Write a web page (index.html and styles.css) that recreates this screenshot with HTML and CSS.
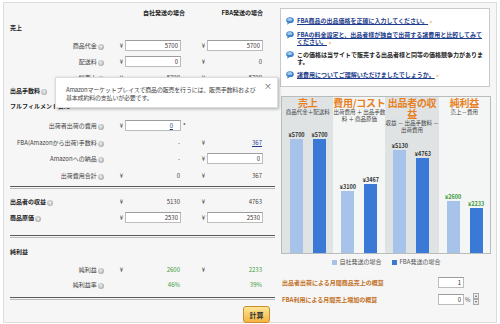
FILE: index.html
```html
<!DOCTYPE html>
<html lang="ja">
<head>
<meta charset="UTF-8">
<meta name="viewport" content="width=device-width, initial-scale=1.0">
<title>FBA料金シミュレーター</title>
<link rel="stylesheet" href="styles.css">
</head>
<body>
<div class="page">

  <div class="calc">
    <div class="grid head">
      <span class="h1">自社発送の場合</span>
      <span class="h2">FBA発送の場合</span>
    </div>

    <div class="title">売上</div>
    <div class="grid row first">
      <span class="label">商品代金 <i class="help">?</i></span>
      <span class="yen">¥</span><input class="field" value="5700">
      <span class="yen">¥</span><input class="field" value="5700">
    </div>
    <div class="grid row">
      <span class="label">配送料 <i class="help">?</i></span>
      <span class="yen">¥</span><input class="field" value="0">
      <span class="yen">¥</span><span class="num">0</span>
    </div>
    <div class="grid row">
      <span class="label">総売上 <i class="help">?</i></span>
      <span class="yen">¥</span><span class="num">5700</span>
      <span class="yen">¥</span><span class="num">5700</span>
    </div>

    <div class="title fee">出品手数料 <i class="help">?</i></div>
    <div class="title ful">フルフィルメント費用</div>

    <div class="grid row first tall">
      <span class="label">出荷者出荷の費用 <i class="help">?</i></span>
      <span class="yen">¥</span><span class="field link-field"><a href="#">0</a></span>
      <span class="mark">*</span><span></span>
    </div>
    <div class="grid row">
      <span class="label">FBA(Amazonから出荷)手数料 <i class="help">?</i></span>
      <span></span><span class="num">-</span>
      <span class="yen">¥</span><span class="num"><a href="#">367</a></span>
    </div>
    <div class="grid row tall">
      <span class="label">Amazonへの納品 <i class="help">?</i></span>
      <span></span><span class="num">-</span>
      <span class="yen">¥</span><input class="field" value="0">
    </div>
    <div class="grid row">
      <span class="label">出荷費用合計 <i class="help">?</i></span>
      <span class="yen">¥</span><span class="num">0</span>
      <span class="yen">¥</span><span class="num">367</span>
    </div>

    <hr class="rule r1">

    <div class="grid row first-r2">
      <span class="label strong">出品者の収益 <i class="help">?</i></span>
      <span class="yen">¥</span><span class="num">5130</span>
      <span class="yen">¥</span><span class="num">4763</span>
    </div>
    <div class="grid row">
      <span class="label strong">商品原価 <i class="help">?</i></span>
      <span class="yen">¥</span><input class="field" value="2530">
      <span class="yen">¥</span><input class="field" value="2530">
    </div>

    <hr class="rule r2">

    <div class="title net">純利益</div>
    <div class="grid row first">
      <span class="label">純利益 <i class="help">?</i></span>
      <span class="yen">¥</span><span class="num green">2600</span>
      <span class="yen">¥</span><span class="num green">2233</span>
    </div>
    <div class="grid row short">
      <span class="label">純利益率 <i class="help">?</i></span>
      <span></span><span class="num green">46%</span>
      <span></span><span class="num green">39%</span>
    </div>

    <hr class="rule r3">

    <div class="actions">
      <button class="calc-btn">計算</button>
    </div>
  </div>

  <div class="side">
    <ul class="tips">
      <li>
        <svg class="bubble" width="8" height="8" viewBox="0 0 8 8"><ellipse cx="4" cy="3.2" rx="3.8" ry="2.9" fill="#3f84c9"/><ellipse cx="3.7" cy="2.5" rx="2.6" ry="1.5" fill="#9fcdf2"/><path d="M1.8 5.3 L1 7.8 L3.8 6" fill="#3f84c9"/></svg>
        <span><a href="#">FBA商品の出品価格を正確に入力してください。</a> <span class="more">»</span></span>
      </li>
      <li>
        <svg class="bubble" width="8" height="8" viewBox="0 0 8 8"><ellipse cx="4" cy="3.2" rx="3.8" ry="2.9" fill="#3f84c9"/><ellipse cx="3.7" cy="2.5" rx="2.6" ry="1.5" fill="#9fcdf2"/><path d="M1.8 5.3 L1 7.8 L3.8 6" fill="#3f84c9"/></svg>
        <span><a href="#">FBAの料金設定と、出品者様が独自で出荷する諸費用と比較してみてください。</a> <span class="more">»</span></span>
      </li>
      <li>
        <svg class="bubble" width="8" height="8" viewBox="0 0 8 8"><ellipse cx="4" cy="3.2" rx="3.8" ry="2.9" fill="#3f84c9"/><ellipse cx="3.7" cy="2.5" rx="2.6" ry="1.5" fill="#9fcdf2"/><path d="M1.8 5.3 L1 7.8 L3.8 6" fill="#3f84c9"/></svg>
        <span>この価格は当サイトで販売する出品者様と同等の価格競争力があります。</span>
      </li>
      <li>
        <svg class="bubble" width="8" height="8" viewBox="0 0 8 8"><ellipse cx="4" cy="3.2" rx="3.8" ry="2.9" fill="#3f84c9"/><ellipse cx="3.7" cy="2.5" rx="2.6" ry="1.5" fill="#9fcdf2"/><path d="M1.8 5.3 L1 7.8 L3.8 6" fill="#3f84c9"/></svg>
        <span><a href="#">諸費用についてご理解いただけましたでしょうか。</a> <span class="more">»</span></span>
      </li>
    </ul>

    <div class="chart">
      <div class="col shade">
        <h3>売上</h3>
        <p>商品代金＋配送料</p>
        <div class="bars">
          <div class="bar"><b>¥5700</b><i style="height:114px"></i></div>
          <div class="bar fba"><b>¥5700</b><i style="height:114px"></i></div>
        </div>
      </div>
      <div class="col">
        <h3>費用/コスト</h3>
        <p>出荷費用 ＋ 出品手数<br>料 ＋ 商品原価</p>
        <div class="bars">
          <div class="bar"><b>¥3100</b><i style="height:62px"></i></div>
          <div class="bar fba"><b>¥3467</b><i style="height:69px"></i></div>
        </div>
      </div>
      <div class="col shade">
        <h3>出品者の収<br>益</h3>
        <p>収益 － 出品手数料 －<br>出荷費用</p>
        <div class="bars">
          <div class="bar"><b>¥5130</b><i style="height:103px"></i></div>
          <div class="bar fba"><b>¥4763</b><i style="height:95px"></i></div>
        </div>
      </div>
      <div class="col">
        <h3>純利益</h3>
        <p>売上－費用</p>
        <div class="bars">
          <div class="bar"><b class="green">¥2600</b><i style="height:52px"></i></div>
          <div class="bar fba"><b class="green">¥2233</b><i style="height:45px"></i></div>
        </div>
      </div>
    </div>

    <div class="legend">
      <span><i class="sw"></i>自社発送の場合</span>
      <span><i class="sw fba"></i>FBA発送の場合</span>
    </div>

    <div class="est first">
      <label>出品者出荷による月間商品売上の概算</label>
      <input class="small" value="1">
    </div>
    <div class="est">
      <label>FBA利用による月間売上増加の概算</label>
      <input class="small" value="0">
      <span class="pct">%</span>
      <span class="spin"><span class="up"></span><span class="down"></span></span>
    </div>
  </div>

  <div class="tooltip">
    Amazonマーケットプレイスで商品の販売を行うには、販売手数料および基本成約料の支払いが必要です。
    <span class="close">×</span>
  </div>

</div>
</body>
</html>
```

FILE: styles.css
```css
body {
  margin: 0;
  font-family: "Noto Sans CJK JP", "Liberation Sans", sans-serif;
  font-size: 6px;
  color: #444;
  background-color: #fff;
}
a {
  color: #1d3c8c;
}
.page {
  position: relative;
  display: flex;
  margin: 2px 3px 0 3px;
  height: 321px;
  box-sizing: border-box;
  border: 1px solid #dcdcdc;
  background-color: #f6f6f6;
}

/* left: calculator */
.calc {
  width: 276px;
  padding-left: 6px;
  box-sizing: border-box;
}
.grid {
  display: grid;
  grid-template-columns: 100px 15px 56px 26px 56px;
  align-items: center;
  height: 16px;
}
.head {
  height: 18px;
  font-weight: bold;
  color: #222;
}
.head .h1 {
  grid-column: 2 / 4;
  text-align: right;
  margin-right: -4px;
}
.head .h2 {
  grid-column: 4 / 6;
  text-align: right;
}
.title {
  height: 14px;
  line-height: 14px;
  font-weight: bold;
  color: #222;
}
.title.fee {
  height: 12px;
  line-height: 12px;
}
.title.ful {
  height: 18px;
  line-height: 18px;
}
.title.net {
  margin-top: 7px;
}
.row.first {
  margin-top: 2px;
}
.row.tall {
  height: 17px;
}
.row.short {
  height: 15px;
}
.row.first-r2 {
  margin-top: 4px;
}
.label {
  text-align: right;
  padding-right: 6px;
  white-space: nowrap;
}
.label.strong {
  text-align: left;
  font-weight: bold;
  color: #222;
}
.help {
  display: inline-block;
  width: 6px;
  height: 6px;
  line-height: 6px;
  border-radius: 50%;
  background: radial-gradient(circle at 40% 35%, #e4e4e4, #9a9a9a);
  color: #fff;
  font-style: normal;
  font-size: 4px;
  text-align: center;
  vertical-align: -1px;
}
.yen {
  text-align: right;
  padding-right: 2px;
  color: #333;
}
.mark {
  padding-left: 2px;
  color: #333;
}
.num {
  text-align: right;
  padding-right: 1px;
  color: #444;
}
.green {
  color: #3a9a3a;
}
.field {
  width: 56px;
  height: 11px;
  box-sizing: border-box;
  margin: 0;
  padding: 0 2px;
  border: 1px solid #bcbcbc;
  border-top-color: #9c9c9c;
  background-color: #fff;
  font: inherit;
  line-height: 9px;
  color: #333;
  text-align: right;
}
.link-field {
  padding-right: 7px;
}
.rule {
  width: 265px;
  height: 1px;
  margin: 0;
  border: 0;
  border-top: 1px solid #5a5a5a;
  border-bottom: 1px solid #bbb;
}
.rule.r1 {
  margin-top: 3px;
}
.rule.r2 {
  margin-top: 10px;
}
.rule.r3 {
  margin-top: 5px;
}
.actions {
  width: 265px;
  margin-top: 6px;
  padding-right: 5px;
  box-sizing: border-box;
  text-align: right;
}
.calc-btn {
  width: 27px;
  height: 17px;
  padding: 0;
  border: 1px solid #c98f2a;
  border-radius: 3px;
  background: linear-gradient(#fde795, #f5b443);
  font-family: inherit;
  font-size: 7px;
  font-weight: bold;
  color: #333;
}

/* right: tips and chart */
.side {
  width: 216px;
}
.tips {
  list-style: none;
  width: 210px;
  margin: 5px 0 0 0;
  padding: 7.5px 4px 7.5px 5px;
  box-sizing: border-box;
  border: 1px solid #c9c9c9;
  background-color: #fff;
  font-weight: bold;
  color: #222;
}
.tips li {
  display: flex;
  gap: 3px;
  line-height: 7px;
}
.tips li + li {
  margin-top: 6px;
}
.bubble {
  flex-shrink: 0;
}
.more {
  color: #e3a23c;
  font-size: 5px;
}
.chart {
  display: flex;
  width: 210px;
  height: 158px;
  margin: 9px 0 0 1px;
  box-sizing: border-box;
  border: 1px solid #b9bcbd;
}
.col {
  flex: 1;
  display: flex;
  flex-direction: column;
  text-align: center;
  background-color: #f4f6f6;
}
.col.shade {
  background-color: #dfe3e4;
}
.col h3 {
  margin: 0 0 1px 0;
  font-size: 10px;
  line-height: 11px;
  letter-spacing: -0.3px;
  white-space: nowrap;
  color: #e8801e;
}
.col p {
  margin: 0;
  font-size: 5.5px;
  line-height: 7px;
  white-space: nowrap;
  color: #444;
}
.bars {
  flex: 1;
  display: flex;
  align-items: flex-end;
  gap: 10px;
  padding-left: 8px;
}
.bar {
  width: 13px;
  display: flex;
  flex-direction: column;
  align-items: center;
}
.bar b {
  font-size: 5.5px;
  line-height: 7px;
  white-space: nowrap;
  color: #333;
}
.bar b.green {
  color: #3a9a3a;
}
.bar i {
  display: block;
  width: 13px;
  background-color: #a7c3ea;
}
.bar.fba i {
  background-color: #3b79d6;
}
.legend {
  display: flex;
  justify-content: center;
  gap: 10px;
  width: 210px;
  margin: 4px 0 0 1px;
  line-height: 8px;
  color: #555;
}
.sw {
  display: inline-block;
  width: 5px;
  height: 5px;
  margin-right: 3px;
  background-color: #a7c3ea;
  vertical-align: -0.5px;
}
.sw.fba {
  background-color: #3b79d6;
}
.est {
  display: flex;
  align-items: center;
  height: 14px;
  margin-top: 3px;
  padding-left: 2px;
}
.est.first {
  margin-top: 9px;
}
.est label {
  width: 156px;
  font-weight: bold;
  color: #c2711f;
}
.small {
  width: 26px;
  height: 11px;
  box-sizing: border-box;
  margin: 0;
  padding: 0 2px;
  border: 1px solid #bcbcbc;
  border-top-color: #9c9c9c;
  background-color: #fff;
  font: inherit;
  color: #333;
  text-align: right;
}
.pct {
  margin-left: 1px;
  color: #555;
}
.spin {
  display: flex;
  flex-direction: column;
  margin-left: 2px;
}
.spin span {
  position: relative;
  width: 6px;
  height: 6px;
  box-sizing: border-box;
  border: 1px solid #aaa;
  background-color: #eee;
}
.spin .up::after,
.spin .down::after {
  content: "";
  position: absolute;
  left: 1px;
  border-left: 1px solid transparent;
  border-right: 1px solid transparent;
}
.spin .up::after {
  top: 1px;
  border-bottom: 2px solid #666;
}
.spin .down::after {
  top: 1px;
  border-top: 2px solid #666;
}

/* tooltip over the fee rows */
.tooltip {
  position: absolute;
  left: 51px;
  top: 74px;
  width: 223px;
  height: 31px;
  box-sizing: border-box;
  padding: 8px 16px 0 10px;
  border: 1px solid #ddd;
  background-color: #fff;
  box-shadow: 1px 1px 3px rgba(0, 0, 0, 0.3);
  line-height: 8px;
  letter-spacing: -0.2px;
  color: #444;
}
.tooltip .close {
  position: absolute;
  top: 4px;
  right: 5px;
  font-size: 8px;
  line-height: 8px;
  letter-spacing: 0;
  color: #555;
}
```
